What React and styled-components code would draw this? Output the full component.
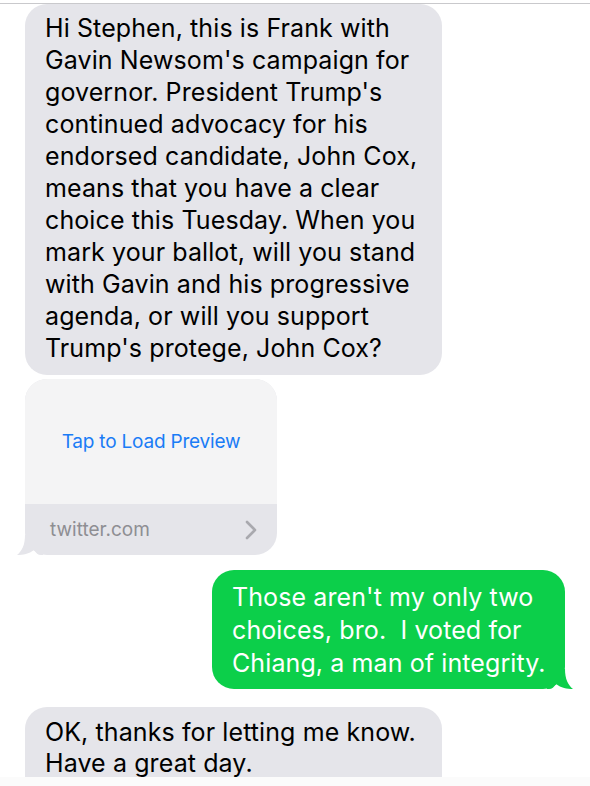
import React from "react";
import styled, { createGlobalStyle } from "styled-components";

const GlobalStyle = createGlobalStyle`
  html, body {
    margin: 0;
    padding: 0;
    background: #ffffff;
  }
  body {
    font-family: Inter, "Noto Sans", "Liberation Sans", sans-serif;
    -webkit-font-smoothing: antialiased;
  }
`;

const Screen = styled.div`
  width: 590px;
  height: 786px;
  display: flex;
  flex-direction: column;
  overflow: hidden;
  background: #fff;
`;

const TopBar = styled.div`
  height: 3px;
  flex: none;
  border-bottom: 1px solid #c9c9cc;
`;

const Thread = styled.div`
  height: 773px;
  flex: none;
  overflow: hidden;
  display: flex;
  flex-direction: column;
`;

const Row = styled.div`
  display: flex;
  justify-content: ${(p) => (p.$me ? "flex-end" : "flex-start")};
  padding: ${(p) => (p.$me ? "0 25px 0 0" : "0 0 0 25px")};
  margin-top: ${(p) => p.$gap || 0}px;
`;

const Bubble = styled.div`
  position: relative;
  width: ${(p) => p.$width}px;
  box-sizing: border-box;
  padding: ${(p) => p.$pad || "8px 16px 11px 20px"};
  border-radius: 22px;
  background: ${(p) => (p.$me ? "#0ccf4a" : "#e5e5ea")};
  color: ${(p) => (p.$me ? "#fff" : "#000")};
  font-size: 25px;
  line-height: ${(p) => p.$lh || 32}px;
  letter-spacing: 0.1px;
  white-space: nowrap;
`;

const Preview = styled.div`
  position: relative;
  width: 252px;
  border-radius: 22px;
  background: #e5e5ea;
  display: flex;
  flex-direction: column;
`;

const PreviewBody = styled.div`
  height: 125px;
  background: #f4f4f5;
  border-radius: 22px 22px 0 0;
  display: flex;
  align-items: center;
  justify-content: center;
`;

const LoadLink = styled.span`
  color: #1a7cf6;
  font-size: 19px;
  letter-spacing: -0.2px;
`;

const PreviewFoot = styled.div`
  height: 51px;
  display: flex;
  align-items: center;
  justify-content: space-between;
  padding: 0 20px 0 25px;
`;

const Domain = styled.span`
  color: #8e8e93;
  font-size: 19px;
`;

const Tail = styled.svg`
  position: absolute;
  bottom: 0;
  ${(p) => (p.$me ? "right: -8px;" : "left: -8px;")}
  width: 26px;
  height: 20px;
`;

const BottomFade = styled.div`
  flex: 1;
  background: #fbfbfb;
`;

function LeftTail({ color }) {
  return (
    <Tail viewBox="0 0 26 20">
      <path
        d="M8 0 L26 0 L26 20 L24 20 C21 20 19 18 17 15 C12 19 6 20 0 20 C5 16 8 10 8 0 Z"
        fill={color}
      />
    </Tail>
  );
}

function RightTail({ color }) {
  return (
    <Tail $me viewBox="0 0 26 20">
      <path
        d="M18 0 L0 0 L0 20 L2 20 C5 20 7 18 9 15 C14 19 20 20 26 20 C21 16 18 10 18 0 Z"
        fill={color}
      />
    </Tail>
  );
}

function Chevron() {
  return (
    <svg width="12" height="20" viewBox="0 0 12 20">
      <path
        d="M2 2 L10 10 L2 18"
        stroke="#a9a9ae"
        strokeWidth="2.6"
        fill="none"
        strokeLinecap="round"
        strokeLinejoin="round"
      />
    </svg>
  );
}

export default function App() {
  return (
    <Screen>
      <GlobalStyle />
      <TopBar />
      <Thread>
        <Row>
          <Bubble $width={417}>
            Hi Stephen, this is Frank with
            <br />
            Gavin Newsom's campaign for
            <br />
            governor. President Trump's
            <br />
            continued advocacy for his
            <br />
            endorsed candidate, John Cox,
            <br />
            means that you have a clear
            <br />
            choice this Tuesday. When you
            <br />
            mark your ballot, will you stand
            <br />
            with Gavin and his progressive
            <br />
            agenda, or will you support
            <br />
            Trump's protege, John Cox?
          </Bubble>
        </Row>
        <Row $gap={4}>
          <Preview>
            <PreviewBody>
              <LoadLink>Tap to Load Preview</LoadLink>
            </PreviewBody>
            <PreviewFoot>
              <Domain>twitter.com</Domain>
              <Chevron />
            </PreviewFoot>
            <LeftTail color="#e5e5ea" />
          </Preview>
        </Row>
        <Row $me $gap={15}>
          <Bubble $me $width={353} $lh={33} $pad="11px 16px 9px 20px">
            Those aren't my only two
            <br />
            choices, bro.&nbsp; I voted for
            <br />
            Chiang, a man of integrity.
            <RightTail color="#0ccf4a" />
          </Bubble>
        </Row>
        <Row $gap={18}>
          <Bubble $width={417} $lh={31} $pad="10px 16px 11px 20px">
            OK, thanks for letting me know.
            <br />
            Have a great day.
            <br />
            &nbsp;
          </Bubble>
        </Row>
      </Thread>
      <BottomFade />
    </Screen>
  );
}
